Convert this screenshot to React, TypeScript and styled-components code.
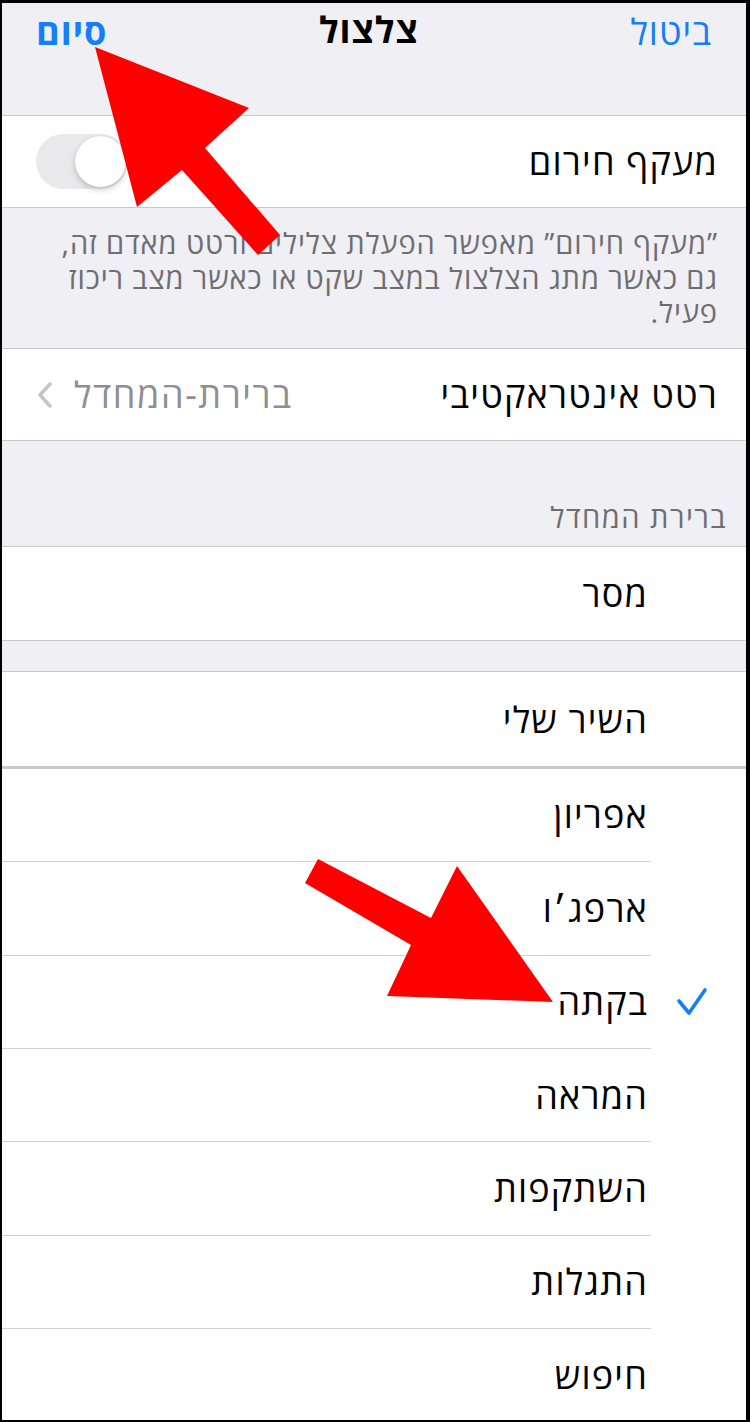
import React from 'react';
import styled, { createGlobalStyle } from 'styled-components';

const GlobalStyle = createGlobalStyle`
  html, body {
    margin: 0;
    padding: 0;
    background: #ffffff;
  }
  * {
    box-sizing: border-box;
  }
`;

const font = `"Open Sans", "Liberation Sans", "DejaVu Sans", sans-serif`;

const Frame = styled.div`
  position: relative;
  width: 750px;
  height: 1422px;
  overflow: hidden;
  border-style: solid;
  border-color: #000;
  border-width: 3px 4px 2px 2px;
  background: #efeff4;
  direction: rtl;
  font-family: ${font};
`;

const NavBar = styled.div`
  height: 112px;
  background: #efeff4;
`;

const NavRow = styled.div`
  height: 56px;
  display: flex;
  align-items: center;
  justify-content: space-between;
  padding: 0 34px 0 34px;
`;

const NavButton = styled.span<{ $bold?: boolean }>`
  font-size: 36px;
  letter-spacing: 1px;
  color: #147efb;
  font-weight: ${p => (p.$bold ? 700 : 400)};
`;

const NavTitle = styled.span`
  font-size: 36px;
  letter-spacing: 1px;
  font-weight: 700;
  color: #000;
  margin-top: -4px;
`;

const Group = styled.div<{ $thickBottom?: boolean; $plain?: boolean }>`
  background: #fff;
  border-top: ${p => (p.$plain ? 'none' : '1px solid #c8c7cc')};
  border-bottom: ${p =>
    p.$plain ? 'none' : p.$thickBottom ? '3px solid #c8c8c8' : '1px solid #c8c7cc'};
`;

const Row = styled.div`
  height: 91px;
  display: flex;
  align-items: center;
  justify-content: space-between;
  padding: 0 28px 0 34px;
`;

const RowLabel = styled.span`
  font-size: 36px;
  letter-spacing: 1.2px;
  color: #000;
`;

const RowValue = styled.span`
  display: flex;
  align-items: center;
  gap: 20px;
  font-size: 36px;
  letter-spacing: 1.6px;
  color: #8e8e93;
`;

const Toggle = styled.div`
  position: relative;
  width: 92px;
  height: 55px;
  border-radius: 28px;
  background: #e9e9eb;
`;

const Knob = styled.div`
  position: absolute;
  top: 2px;
  right: 2px;
  width: 51px;
  height: 51px;
  border-radius: 50%;
  background: #fff;
  box-shadow: 0 3px 6px rgba(0, 0, 0, 0.18), 0 0 1px rgba(0, 0, 0, 0.15);
`;

const Footer = styled.div`
  height: 140px;
  padding: 18px 28px 0 26px;
  font-size: 29px;
  letter-spacing: 0.9px;
  line-height: 34.5px;
  color: #6d6d72;
`;

const SectionHeader = styled.div<{ $h: number }>`
  height: ${p => p.$h}px;
  display: flex;
  align-items: flex-end;
  padding: 0 19px 12px 0;
  font-size: 29px;
  letter-spacing: 1.5px;
  line-height: 34px;
  color: #6d6d72;
`;

const ToneRow = styled.div`
  height: 93.4px;
  display: flex;
  align-items: stretch;
`;

const CheckCell = styled.div`
  width: 95px;
  flex: none;
  display: flex;
  align-items: center;
  justify-content: flex-start;
  padding-right: 38px;
`;

const ToneBody = styled.div<{ $sep?: boolean }>`
  flex: 1;
  display: flex;
  align-items: center;
  padding-right: 3px;
  border-bottom: ${p => (p.$sep ? '1px solid #d1d1d6' : 'none')};
`;

const Overlay = styled.svg`
  position: absolute;
  left: -2px;
  top: -3px;
  width: 750px;
  height: 1422px;
  pointer-events: none;
`;

const Chevron = () => (
  <svg width="18" height="28" viewBox="0 0 18 28">
    <polyline points="14,3 4,14 14,25" fill="none" stroke="#c4c4c7" strokeWidth="3.5" strokeLinecap="round" strokeLinejoin="round" />
  </svg>
);

const Check = () => (
  <svg width="32" height="30" viewBox="0 0 32 30">
    <polyline points="3,14 13,26 29,3" fill="none" stroke="#147efb" strokeWidth="3.6" strokeLinecap="round" strokeLinejoin="round" />
  </svg>
);

const tones = ['אפריון', 'ארפג׳ו', 'בקתה', 'המראה', 'השתקפות', 'התגלות', 'חיפוש'];
const selected = 'בקתה';

export default function App() {
  return (
    <>
      <GlobalStyle />
      <Frame>
        <NavBar>
          <NavRow>
            <NavButton>ביטול</NavButton>
            <NavTitle>צלצול</NavTitle>
            <NavButton $bold>סיום</NavButton>
          </NavRow>
        </NavBar>

        <Group>
          <Row>
            <RowLabel>מעקף חירום</RowLabel>
            <Toggle>
              <Knob />
            </Toggle>
          </Row>
        </Group>
        <Footer>
          ”מעקף חירום” מאפשר הפעלת צלילים ורטט מאדם זה, גם כאשר מתג הצלצול במצב שקט או כאשר מצב ריכוז פעיל.
        </Footer>

        <Group>
          <Row>
            <RowLabel>רטט אינטראקטיבי</RowLabel>
            <RowValue>
              ברירת-המחדל
              <Chevron />
            </RowValue>
          </Row>
        </Group>

        <SectionHeader $h={105}>ברירת המחדל</SectionHeader>
        <Group>
          <ToneRow>
            <CheckCell />
            <ToneBody>
              <RowLabel>מסר</RowLabel>
            </ToneBody>
          </ToneRow>
        </Group>

        <SectionHeader $h={30} />
        <Group $thickBottom>
          <ToneRow>
            <CheckCell />
            <ToneBody>
              <RowLabel>השיר שלי</RowLabel>
            </ToneBody>
          </ToneRow>
        </Group>

        <Group $plain>
          {tones.map((t, i) => (
            <ToneRow key={t}>
              <CheckCell>{t === selected && <Check />}</CheckCell>
              <ToneBody $sep={i < tones.length - 1}>
                <RowLabel>{t}</RowLabel>
              </ToneBody>
            </ToneRow>
          ))}
        </Group>

        <Overlay viewBox="0 0 750 1422">
          <polygon points="95,47 249,108 205,148 280,235 258,255 182,170 137,207" fill="#ff0000" />
          <polygon points="553,1002 457,866 431,918 318,859 305,883 411,945 387,996" fill="#ff0000" />
        </Overlay>
      </Frame>
    </>
  );
}
